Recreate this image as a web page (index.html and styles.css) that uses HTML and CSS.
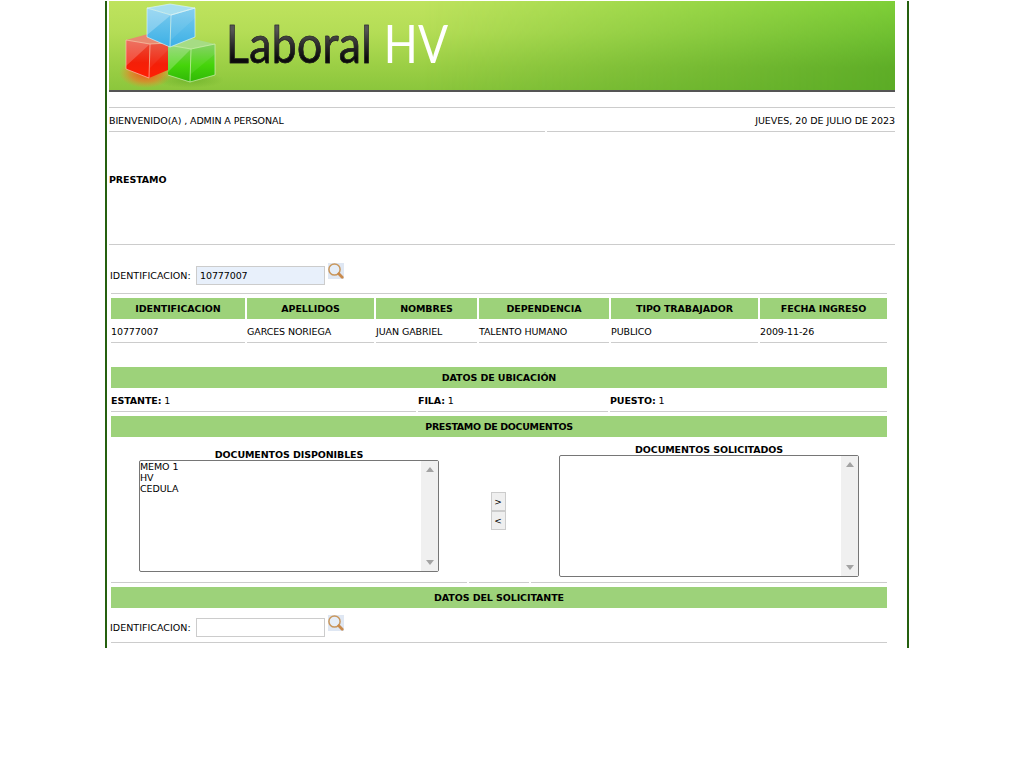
FILE: index.html
```html
<!DOCTYPE html>
<html lang="es">
<head>
    <meta charset="UTF-8">
    <meta name="viewport" content="width=device-width, initial-scale=1.0">
    <title>Laboral HV</title>
    <link rel="stylesheet" href="styles.css">
</head>
<body>
    <div class="page">
        <header class="banner">
            <svg class="cubes" width="110" height="90" viewBox="0 1 110 90">
                <defs>
                    <radialGradient id="glow" cx="0.5" cy="0.5" r="0.5">
                        <stop offset="0" stop-color="#ff3a10" stop-opacity=".9"/>
                        <stop offset=".6" stop-color="#ff6a20" stop-opacity=".55"/>
                        <stop offset="1" stop-color="#ff8a2a" stop-opacity="0"/>
                    </radialGradient>
                    <radialGradient id="shade" cx="0.5" cy="0.5" r="0.5">
                        <stop offset="0" stop-color="#5fa822" stop-opacity=".6"/>
                        <stop offset="1" stop-color="#5fa822" stop-opacity="0"/>
                    </radialGradient>
                    <linearGradient id="blue" x1="0" y1="0" x2="0" y2="1">
                        <stop offset="0" stop-color="#7ccbee"/>
                        <stop offset="1" stop-color="#3cb0e6"/>
                    </linearGradient>
                    <linearGradient id="red" x1="0" y1="0" x2="0" y2="1">
                        <stop offset="0" stop-color="#e8503a"/>
                        <stop offset=".6" stop-color="#f41f08"/>
                        <stop offset="1" stop-color="#ff1f04"/>
                    </linearGradient>
                    <linearGradient id="green" x1="0" y1="0" x2="0" y2="1">
                        <stop offset="0" stop-color="#7ccf58"/>
                        <stop offset=".55" stop-color="#45d40a"/>
                        <stop offset="1" stop-color="#2fb806"/>
                    </linearGradient>
                </defs>
                <ellipse cx="28" cy="73" rx="27" ry="15" fill="url(#glow)"/>
                <ellipse cx="72" cy="80" rx="34" ry="8" fill="url(#shade)"/>
                <!-- rojo -->
                <polygon points="8,40 30,34 50,43 32,44" fill="#e88a70"/>
                <polygon points="8,40 32,44 31,78 8,69" fill="url(#red)"/>
                <polygon points="32,44 50,43 50,70 31,78" fill="url(#red)"/>
                <polygon points="8,40 32,44 8,66" fill="#fff" opacity=".2"/>
                <polygon points="32,44 50,43 50,50 32,68" fill="#fff" opacity=".06"/>
                <path d="M8 40 32 44 31 78 8 69ZM32 44 50 43" fill="none" stroke="#ffc8b8" stroke-width=".8" opacity=".8"/>
                <!-- verde -->
                <polygon points="50,45 72,38 97,44 73,49" fill="#a6dc84"/>
                <polygon points="50,45 73,49 72,82 50,75" fill="url(#green)"/>
                <polygon points="73,49 97,44 97,75 72,82" fill="url(#green)"/>
                <polygon points="50,45 73,49 50,72" fill="#fff" opacity=".22"/>
                <polygon points="73,49 97,44 97,54 73,74" fill="#fff" opacity=".08"/>
                <path d="M50 45 73 49 72 82 50 75M73 49 97 44 97 75 72 82" fill="none" stroke="#d8f4c0" stroke-width=".8" opacity=".8"/>
                <!-- azul -->
                <polygon points="29,8 52,4 77,8 53,15" fill="#a8dff0"/>
                <polygon points="29,8 53,15 52,47 29,37" fill="url(#blue)"/>
                <polygon points="53,15 77,8 77,37 52,47" fill="url(#blue)"/>
                <polygon points="29,8 53,15 29,35" fill="#fff" opacity=".25"/>
                <polygon points="53,15 77,8 77,18 53,40" fill="#fff" opacity=".08"/>
                <path d="M29 8 52 4 77 8 53 15ZM53 15 52 47 29 37 29 8M53 15 77 8 77 37 52 47" fill="none" stroke="#e0f6fc" stroke-width=".8" opacity=".8"/>
            </svg>
            <div class="brand"><span class="brand-dark">Laboral</span> <span class="brand-light">HV</span></div>
        </header>

        <div class="greeting">
            <div class="greeting-cell">BIENVENIDO(A) , ADMIN A PERSONAL</div>
            <div class="greeting-cell greeting-date">JUEVES, 20 DE JULIO DE 2023</div>
        </div>

        <h1 class="page-title">PRESTAMO</h1>

        <div class="content">
            <div class="search-row search-first">
                <label>IDENTIFICACION:</label>
                <input class="field field-filled" type="text" value="10777007">
                <svg class="lens" width="16" height="16" viewBox="0 0 16 16">
                    <rect width="16" height="16" fill="#dfe7f3"/>
                    <circle cx="6.5" cy="6.5" r="5.6" fill="#e6eef8" stroke="#c9975c" stroke-width="1.5"/>
                    <path d="M10.8 10.8 14.2 14.2" stroke="#c98a4c" stroke-width="2.8" stroke-linecap="round"/>
                </svg>
            </div>

            <div class="grid-person">
                <div class="head">IDENTIFICACION</div>
                <div class="head">APELLIDOS</div>
                <div class="head">NOMBRES</div>
                <div class="head">DEPENDENCIA</div>
                <div class="head">TIPO TRABAJADOR</div>
                <div class="head">FECHA INGRESO</div>
                <div class="cell">10777007</div>
                <div class="cell">GARCES NORIEGA</div>
                <div class="cell">JUAN GABRIEL</div>
                <div class="cell">TALENTO HUMANO</div>
                <div class="cell">PUBLICO</div>
                <div class="cell">2009-11-26</div>
            </div>

            <div class="head head-location">DATOS DE UBICACIÓN</div>
            <div class="grid-location">
                <div class="cell"><b>ESTANTE:</b> 1</div>
                <div class="cell"><b>FILA:</b> 1</div>
                <div class="cell"><b>PUESTO:</b> 1</div>
            </div>

            <div class="head head-loan">PRESTAMO DE DOCUMENTOS</div>
            <div class="grid-docs">
                <div class="docs-col">
                    <div class="docs-title">DOCUMENTOS DISPONIBLES</div>
                    <div class="listbox listbox-short">
                        <ul class="listbox-items">
                            <li>MEMO 1</li>
                            <li>HV</li>
                            <li>CEDULA</li>
                        </ul>
                        <div class="scrollbar"><span class="arrow-up"></span><span class="arrow-down"></span></div>
                    </div>
                </div>
                <div class="docs-col docs-buttons">
                    <button class="move" type="button">&gt;</button>
                    <button class="move" type="button">&lt;</button>
                </div>
                <div class="docs-col">
                    <div class="docs-title">DOCUMENTOS SOLICITADOS</div>
                    <div class="listbox listbox-tall">
                        <ul class="listbox-items"></ul>
                        <div class="scrollbar"><span class="arrow-up"></span><span class="arrow-down"></span></div>
                    </div>
                </div>
            </div>

            <div class="head head-applicant">DATOS DEL SOLICITANTE</div>
            <div class="search-row search-last">
                <label>IDENTIFICACION:</label>
                <input class="field" type="text">
                <svg class="lens" width="16" height="16" viewBox="0 0 16 16">
                    <rect width="16" height="16" fill="#dfe7f3"/>
                    <circle cx="6.5" cy="6.5" r="5.6" fill="#e6eef8" stroke="#c9975c" stroke-width="1.5"/>
                    <path d="M10.8 10.8 14.2 14.2" stroke="#c98a4c" stroke-width="2.8" stroke-linecap="round"/>
                </svg>
            </div>
        </div>
    </div>
</body>
</html>
```

FILE: styles.css
```css
body {
    margin: 0;
    background-color: #fff;
    color: #000;
    font-family: "DejaVu Sans", Verdana, sans-serif;
    font-size: 9.5px;
    letter-spacing: -0.1px;
}
.page {
    box-sizing: border-box;
    width: 804px;
    height: 647px;
    margin-left: 105px;
    padding-left: 2px;
    border-left: 2px solid #25600f;
    border-right: 2px solid #25600f;
}
.banner {
    display: flex;
    position: relative;
    box-sizing: border-box;
    width: 786px;
    height: 91px;
    margin-top: 1px;
    overflow: hidden;
    background: linear-gradient(180deg, #bfe35e 0%, #b4dd56 35%, #9dd046 70%, #8bc63c 100%);
    border-bottom: 2px solid #555;
}
.banner::before {
    content: "";
    position: absolute;
    inset: 0;
    background: linear-gradient(180deg, #6fca2e 0%, #58b225 50%, #4fa520 75%);
    -webkit-mask-image: linear-gradient(90deg, transparent 40%, rgba(0, 0, 0, .8) 100%);
    mask-image: linear-gradient(90deg, transparent 40%, rgba(0, 0, 0, .8) 100%);
}
.cubes {
    flex: none;
    position: relative;
    margin-left: 9px;
}
.brand {
    position: relative;
    flex: none;
    margin-left: -2px;
    font-family: "Lato", sans-serif;
    font-size: 53px;
    font-weight: 400;
    line-height: 84px;
    letter-spacing: 0.4px;
    white-space: nowrap;
    transform: scaleX(0.84);
    transform-origin: left center;
}
.brand-dark {
    color: #1c1c1c;
    background: linear-gradient(180deg, #555 30%, #2a2a2a 55%, #0c0c0c 75%);
    -webkit-background-clip: text;
    background-clip: text;
    -webkit-text-fill-color: transparent;
    -webkit-text-stroke: 0.6px #222;
}
.brand-light {
    color: #fff;
}
.greeting {
    display: grid;
    grid-template-columns: 436px 348px;
    column-gap: 2px;
    width: 786px;
    margin-top: 15px;
    border-top: 1px solid #ccc;
}
.greeting-cell {
    height: 23px;
    line-height: 25px;
    border-bottom: 1px solid #ccc;
    white-space: nowrap;
}
.greeting-date {
    text-align: right;
    letter-spacing: -0.03px;
}
.page-title {
    box-sizing: border-box;
    width: 786px;
    height: 113px;
    margin: 0;
    padding-top: 42px;
    font-size: 9.5px;
    border-bottom: 1px solid #ccc;
}
.content {
    width: 776px;
    margin-left: 2px;
}
.search-row {
    display: flex;
    align-items: flex-start;
    box-sizing: border-box;
    border-bottom: 1px solid #ccc;
}
.search-row label {
    width: 86px;
    margin-top: 6px;
    margin-left: -1px;
    line-height: 14px;
    letter-spacing: 0.03px;
}
.search-first {
    height: 49px;
    padding-top: 18px;
}
.search-last {
    height: 35px;
    padding-top: 7px;
}
.field {
    box-sizing: border-box;
    width: 129px;
    height: 19px;
    margin: 3px 3px 0 0;
    padding: 0 3px;
    border: 1px solid #ccc;
    background-color: #fff;
    font-family: inherit;
    font-size: 9.5px;
    letter-spacing: inherit;
    color: #000;
}
.field-filled {
    background-color: #e8f0fb;
}
.lens {
    flex: none;
}
.grid-person {
    display: grid;
    grid-template-columns: 134px 127px 101px 130px 147px 127px;
    column-gap: 2px;
    margin-top: 4px;
}
.head {
    height: 21px;
    line-height: 21px;
    background-color: #9dd27a;
    font-weight: bold;
    text-align: center;
}
.cell {
    height: 23px;
    line-height: 25px;
    border-bottom: 1px solid #ccc;
    white-space: nowrap;
}
.head-location {
    margin-top: 24px;
}
.grid-location {
    display: grid;
    grid-template-columns: 305px 190px 277px;
    column-gap: 2px;
}
.head-loan {
    margin-top: 4px;
    letter-spacing: -0.35px;
}
.grid-docs {
    display: grid;
    grid-template-columns: 356px 60px 356px;
    column-gap: 2px;
    height: 146px;
}
.docs-col {
    display: flex;
    flex-direction: column;
    align-items: center;
    justify-content: center;
    box-sizing: border-box;
    padding-top: 2px;
    border-bottom: 1px solid #ccc;
}
.docs-title {
    font-weight: bold;
    line-height: 11px;
}
.docs-buttons {
    padding-top: 3px;
    padding-right: 2px;
}
.move {
    box-sizing: border-box;
    width: 15px;
    height: 19px;
    margin: 0;
    padding: 0;
    border: 1px solid #ccc;
    background-color: #efefef;
    font-family: inherit;
    font-size: 9px;
    color: #000;
}
.listbox {
    display: flex;
    box-sizing: border-box;
    width: 300px;
    border: 1px solid #767676;
    border-radius: 2px;
    background-color: #fff;
}
.listbox-short {
    height: 112px;
}
.listbox-tall {
    height: 122px;
}
.listbox-items {
    flex: 1;
    margin: 0;
    padding: 0;
    list-style: none;
    line-height: 11px;
}
.scrollbar {
    display: flex;
    flex-direction: column;
    justify-content: space-between;
    align-items: center;
    width: 17px;
    padding: 6px 0;
    box-sizing: border-box;
    background-color: #f0f0f0;
}
.arrow-up {
    border-left: 4px solid transparent;
    border-right: 4px solid transparent;
    border-bottom: 5px solid #a3a3a3;
}
.arrow-down {
    border-left: 4px solid transparent;
    border-right: 4px solid transparent;
    border-top: 5px solid #a3a3a3;
}
.head-applicant {
    margin-top: 4px;
}
```
